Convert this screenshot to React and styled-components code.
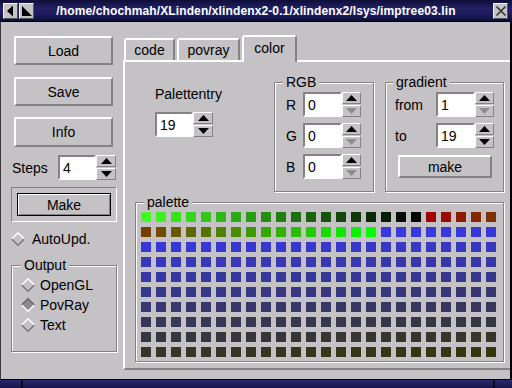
import React from 'react';
import styled, { createGlobalStyle } from 'styled-components';

const GREY = '#c5c2c5';
const DARK = '#848284';
const FONT = '"Liberation Sans", Arial, Helvetica, sans-serif';

const Global = createGlobalStyle`
  html, body { margin: 0; padding: 0; background: ${GREY}; }
  body { font-family: ${FONT}; font-size: 14px; color: #000; }
  * { box-sizing: border-box; }
`;

const Window = styled.div`
  width: 512px;
  height: 388px;
  display: flex;
  flex-direction: column;
  background: ${GREY};
  overflow: hidden;
`;

const TitleBar = styled.div`
  height: 22px;
  flex: none;
  display: grid;
  grid-template-columns: 1fr auto 1fr;
  align-items: center;
  padding: 0 3px;
  background: linear-gradient(180deg, #0e0e38 0%, #202064 40%, #1c1c5e 70%, #0c0c34 100%);
  border-bottom: 1px solid #000;
`;

const TitleButtons = styled.div`
  display: flex;
  gap: 1px;
  justify-self: ${(p) => (p.$end ? 'end' : 'start')};
  padding-right: ${(p) => (p.$end ? '1px' : '0')};
`;

const TitleButton = styled.div`
  width: 15px;
  height: 16px;
  background: #c3c3c3;
  border: 1px solid;
  border-color: #f4f4f4 #555 #555 #f4f4f4;
  display: flex;
  align-items: center;
  justify-content: center;
`;

const TitleText = styled.div`
  color: #fff;
  font-weight: bold;
  font-size: 12px;
  letter-spacing: 0.12px;
  white-space: nowrap;
`;

const Main = styled.div`
  flex: 1;
  display: flex;
  border-left: 1px solid #3a3a3a;
  border-right: 2px solid #000;
`;

const LeftCol = styled.div`
  width: 122px;
  flex: none;
  display: flex;
  flex-direction: column;
  padding: 14px 0 0 10px;
`;

const Button = styled.div`
  width: ${(p) => p.$w || 99}px;
  height: ${(p) => p.$h || 29}px;
  margin-top: ${(p) => p.$mt || 0}px;
  margin-left: ${(p) => p.$ml || 0}px;
  border: 2px solid;
  border-color: #fff ${DARK} ${DARK} #fff;
  display: flex;
  align-items: center;
  justify-content: center;
  font-size: 14px;
`;

const Row = styled.div`
  display: flex;
  align-items: center;
  height: ${(p) => p.$h || 25}px;
  margin-top: ${(p) => p.$mt || 0}px;
`;

const Label = styled.span`
  width: ${(p) => p.$w}px;
  padding-left: ${(p) => p.$pl || 0}px;
  flex: none;
  white-space: nowrap;
`;

const Field = styled.input`
  width: ${(p) => p.$w || 39}px;
  height: 25px;
  border: 2px solid;
  border-color: ${DARK} #fff #fff ${DARK};
  background: #fff;
  font-family: ${FONT};
  font-size: 14px;
  color: #000;
  padding: 1px 0 0 3px;
  margin: 0;
  outline: none;
`;

const Spinner = styled.div`
  width: ${(p) => p.$w || 19}px;
  height: 25px;
  display: flex;
  flex-direction: column;
  justify-content: space-between;
`;

const ArrowBtn = styled.div`
  height: 12px;
  border: 1px solid;
  border-color: #fff ${DARK} ${DARK} #fff;
  display: flex;
  align-items: center;
  justify-content: center;
`;

const Arrow = ({ up, disabled }) => (
  <svg width="11" height="6" viewBox="0 0 11 6">
    <polygon
      points={up ? '0,6 5.5,0 11,6' : '0,0 5.5,6 11,0'}
      fill={disabled ? '#8e8b8e' : '#000'}
    />
  </svg>
);

const SpinField = ({ value, w, sw, upDis, downDis }) => (
  <>
    <Field $w={w} value={value} readOnly />
    <Spinner $w={sw}>
      <ArrowBtn><Arrow up disabled={upDis} /></ArrowBtn>
      <ArrowBtn><Arrow disabled={downDis} /></ArrowBtn>
    </Spinner>
  </>
);

const DefaultFrame = styled.div`
  width: 106px;
  height: 35px;
  margin-top: 7px;
  border: 1px solid;
  border-color: ${DARK} #fff #fff ${DARK};
  padding: 5px 5px;
`;

const DefaultButton = styled.div`
  height: 23px;
  border: 1px solid #000;
  box-shadow: inset 1px 1px 0 #fff, inset -1px -1px 0 ${DARK};
  display: flex;
  align-items: center;
  justify-content: center;
`;

const RadioRow = styled.div`
  display: flex;
  align-items: center;
  gap: ${(p) => p.$gap || 7}px;
  height: ${(p) => p.$h || 20}px;
  margin-top: ${(p) => p.$mt || 0}px;
`;

const Diamond = ({ on }) => (
  <svg width="14" height="14" viewBox="0 0 14 14">
    <polygon points="7,0 14,7 7,14 0,7" fill={on ? '#8e8b8e' : GREY} />
    <polyline points="0.7,7 7,0.7 13.3,7" fill="none" stroke={on ? '#6a686a' : '#fff'} strokeWidth="1.4" />
    <polyline points="0.7,7 7,13.3 13.3,7" fill="none" stroke={on ? '#fff' : '#7a787a'} strokeWidth="1.4" />
  </svg>
);

const GroupBox = styled.div`
  position: relative;
  width: ${(p) => p.$w}px;
  height: ${(p) => p.$h}px;
  margin-top: ${(p) => p.$mt || 0}px;
  margin-left: ${(p) => p.$ml || 0}px;
  flex: none;
  border: 1px solid ${DARK};
  box-shadow: inset 1px 1px 0 #fff, 1px 1px 0 #fff;
  padding: ${(p) => p.$pad || '0'};
`;

const GroupLabel = styled.span`
  position: absolute;
  top: -9px;
  left: ${(p) => p.$left || 8}px;
  background: ${GREY};
  padding: 0 3px;
  line-height: 16px;
`;

const Notebook = styled.div`
  flex: 1;
  display: flex;
  flex-direction: column;
  padding-top: 13px;
  min-width: 0;
`;

const TabRow = styled.div`
  height: 25px;
  flex: none;
  display: flex;
  align-items: flex-end;
  gap: 2px;
  padding-left: 1px;
  position: relative;
  z-index: 1;
`;

const Tab = styled.div`
  width: ${(p) => p.$w}px;
  height: ${(p) => (p.$active ? 27 : 22)}px;
  margin-bottom: ${(p) => (p.$active ? -2 : 0)}px;
  padding-bottom: ${(p) => (p.$active ? 3 : 0)}px;
  background: ${GREY};
  border: 2px solid;
  border-bottom: none;
  border-color: #fff ${DARK} transparent #fff;
  border-radius: 3px 3px 0 0;
  display: flex;
  align-items: center;
  justify-content: center;
`;

const Panel = styled.div`
  height: 310px;
  flex: none;
  border-top: 2px solid #fff;
  border-left: 2px solid #fff;
  border-bottom: 2px solid ${DARK};
  padding: 0 6px 0 10px;
  display: flex;
  flex-direction: column;
`;

const TopSection = styled.div`
  height: 140px;
  display: flex;
  align-items: flex-start;
`;

const EntryBlock = styled.div`
  width: 120px;
  margin: 24px 0 0 20px;
  display: flex;
  flex-direction: column;
  line-height: 16px;
`;

const Grid = styled.div`
  display: grid;
  grid-template-columns: repeat(24, 10px);
  grid-auto-rows: 10px;
  gap: 5px;
`;

const Swatch = styled.div`
  width: 10px;
  height: 10px;
`;

const BottomBar = styled.div`
  height: 9px;
  flex: none;
  display: flex;
  border-top: 1px solid #000;
  background: #1c1c5c;
`;

const BottomSeg = styled.div`
  width: ${(p) => (p.$w ? `${p.$w}px` : 'auto')};
  flex: ${(p) => (p.$w ? 'none' : 1)};
  border-left: ${(p) => (p.$sep ? '2px solid #0a0a20' : 'none')};
  background: linear-gradient(180deg, #2a2a70, #14144a);
`;

const lerp = (a, b, t) => a.map((v, i) => Math.round(v + (b[i] - v) * t));
const palette = (() => {
  const out = [];
  for (let i = 0; i < 240; i++) {
    let c;
    if (i <= 18) c = lerp([64, 255, 32], [0, 0, 0], i / 18);
    else if (i <= 39) c = lerp([160, 0, 0], [0, 255, 0], (i - 19) / 20);
    else c = lerp([56, 56, 224], [54, 54, 16], (i - 40) / 199);
    out.push(`rgb(${c[0]},${c[1]},${c[2]})`);
  }
  return out;
})();

export default function App() {
  return (
    <>
      <Global />
      <Window>
        <TitleBar>
          <TitleButtons>
            <TitleButton>
              <svg width="11" height="12" viewBox="0 0 11 12">
                <polygon points="2,6 8,0.5 8,11.5" fill="#000" />
              </svg>
            </TitleButton>
            <TitleButton>
              <svg width="11" height="12" viewBox="0 0 11 12">
                <polygon points="1,1 1,11 11,11" fill="#000" />
              </svg>
            </TitleButton>
          </TitleButtons>
          <TitleText>/home/chochmah/XLinden/xlindenx2-0.1/xlindenx2/lsys/imptree03.lin</TitleText>
          <TitleButtons $end>
            <TitleButton>
              <svg width="12" height="12" viewBox="0 0 12 12">
                <path d="M1.5 1.5 L10.5 10.5 M10.5 1.5 L1.5 10.5" stroke="#333" strokeWidth="1.6" />
              </svg>
            </TitleButton>
          </TitleButtons>
        </TitleBar>

        <Main>
          <LeftCol>
            <Button $ml={3}>Load</Button>
            <Button $ml={3} $mt={12}>Save</Button>
            <Button $ml={3} $mt={11} $h={30}>Info</Button>
            <Row $mt={8}>
              <Label $w={47} $pl={1}>Steps</Label>
              <SpinField value="4" w={38} sw={20} />
            </Row>
            <DefaultFrame>
              <DefaultButton>Make</DefaultButton>
            </DefaultFrame>
            <RadioRow $mt={9} $h={16}>
              <Diamond />
              <span>AutoUpd.</span>
            </RadioRow>
            <GroupBox $w={106} $h={87} $mt={18} $pad="9px 0 0 9px">
              <GroupLabel $left={9}>Output</GroupLabel>
              <RadioRow $gap={5}><Diamond /><span>OpenGL</span></RadioRow>
              <RadioRow $gap={5}><Diamond on /><span>PovRay</span></RadioRow>
              <RadioRow $gap={5}><Diamond /><span>Text</span></RadioRow>
            </GroupBox>
          </LeftCol>

          <Notebook>
            <TabRow>
              <Tab $w={51}>code</Tab>
              <Tab $w={63}>povray</Tab>
              <Tab $w={55} $active>color</Tab>
            </TabRow>
            <Panel>
              <TopSection>
                <EntryBlock>
                  <span>Palettentry</span>
                  <Row $mt={10}>
                    <SpinField value="19" w={38} sw={20} />
                  </Row>
                </EntryBlock>
                <GroupBox $w={100} $h={110} $mt={20} $pad="9px 0 0 11px">
                  <GroupLabel $left={8}>RGB</GroupLabel>
                  <Row>
                    <Label $w={17}>R</Label>
                    <SpinField value="0" downDis />
                  </Row>
                  <Row $mt={6}>
                    <Label $w={17}>G</Label>
                    <SpinField value="0" downDis />
                  </Row>
                  <Row $mt={6}>
                    <Label $w={17}>B</Label>
                    <SpinField value="0" downDis />
                  </Row>
                </GroupBox>
                <GroupBox $w={119} $h={110} $mt={20} $ml={11} $pad="9px 0 0 9px">
                  <GroupLabel $left={7}>gradient</GroupLabel>
                  <Row>
                    <Label $w={41}>from</Label>
                    <SpinField value="1" downDis />
                  </Row>
                  <Row $mt={6}>
                    <Label $w={41}>to</Label>
                    <SpinField value="19" />
                  </Row>
                  <Button $w={94} $h={23} $mt={7} $ml={3}>make</Button>
                </GroupBox>
              </TopSection>
              <GroupBox $w={369} $h={160} $pad="9px 0 0 5px">
                <GroupLabel $left={8}>palette</GroupLabel>
                <Grid>
                  {palette.map((c, i) => (
                    <Swatch key={i} style={{ background: c }} />
                  ))}
                </Grid>
              </GroupBox>
            </Panel>
          </Notebook>
        </Main>

        <BottomBar>
          <BottomSeg $w={21} />
          <BottomSeg $sep />
          <BottomSeg $w={19} $sep />
        </BottomBar>
      </Window>
    </>
  );
}
